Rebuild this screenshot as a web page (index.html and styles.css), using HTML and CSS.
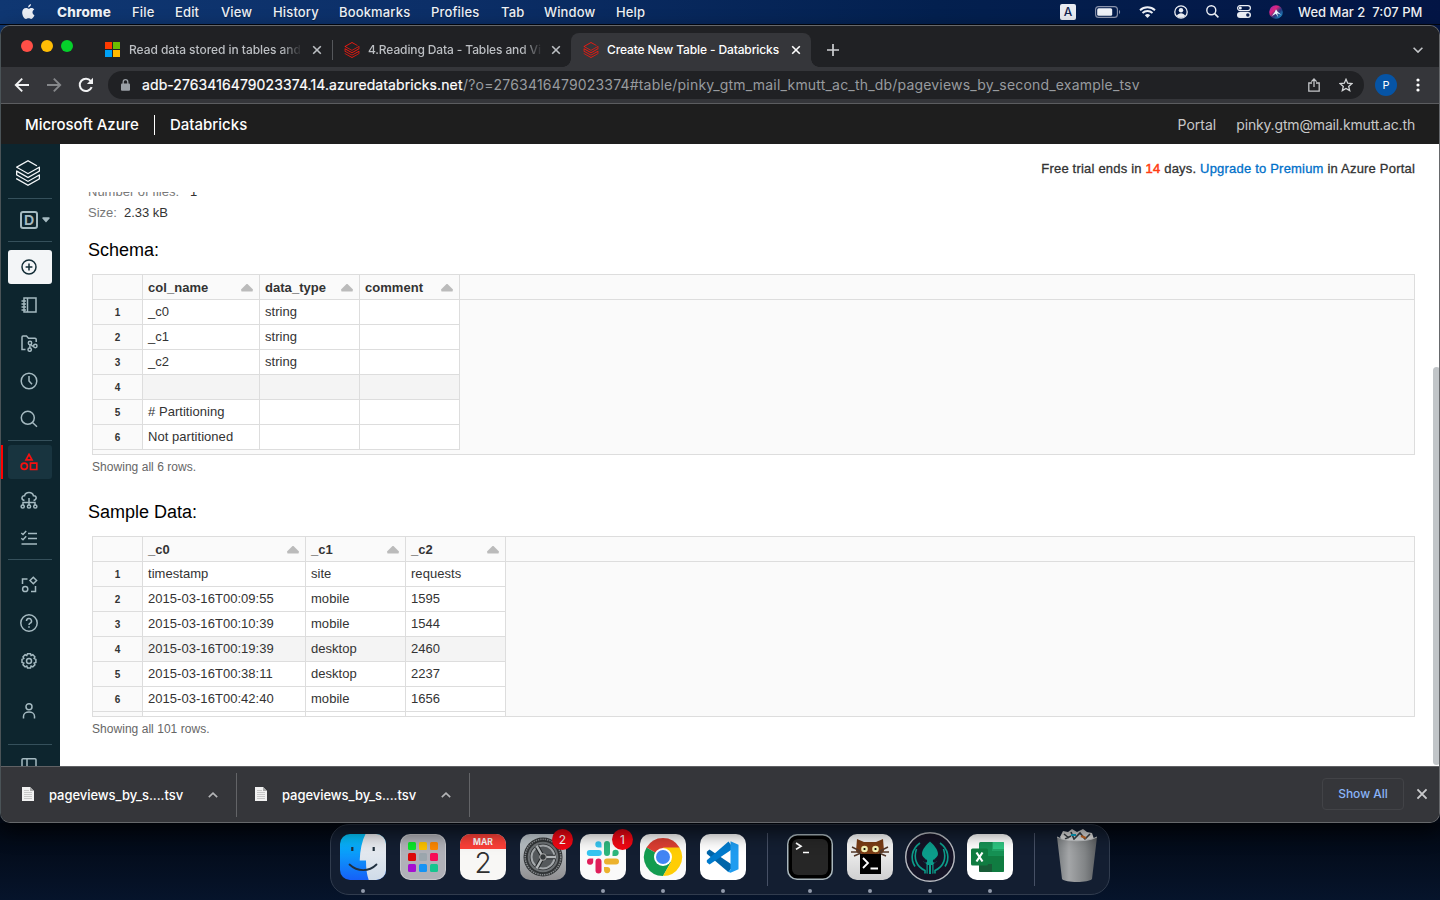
FILE: index.html
```html
<!DOCTYPE html>
<html lang="en">
<head>
<meta charset="utf-8">
<title>Create New Table - Databricks</title>
<link rel="stylesheet" href="styles.css">
</head>
<body>
<svg class="defs" width="0" height="0">
  <symbol id="bricks" viewBox="0 0 24 24"><path fill="currentColor" d="M.95 14.184L12 20.403l9.919-5.55v2.21L12 22.662l-10.484-5.96-.565.308v.77L12 24l11.05-6.218v-4.317l-.515-.309L12 19.118l-9.867-5.653v-2.21L12 16.805l11.05-6.218V6.32l-.515-.308L12 11.974 2.647 6.681 12 1.388l7.76 4.368.668-.411v-.566L12 0 .95 6.27v.72L12 13.207l9.919-5.55v2.26L12 15.52 1.516 9.56l-.565.308z"/></symbol>
  <symbol id="close" viewBox="0 0 10 10"><path d="M1.2 1.2l7.6 7.6M8.8 1.2L1.2 8.8" stroke="currentColor" stroke-width="1.6" fill="none"/></symbol>
  <symbol id="file" viewBox="0 0 12 14"><path fill="#f1f1f1" d="M0 0h8l4 4v10H0z"/><path fill="#aaa" d="M8 0v4h4z"/><path stroke="#c8c8c8" d="M2 3.5h5M2 5.5h8M2 7.5h8M2 9.5h8M2 11.5h8"/></symbol>
  <symbol id="up" viewBox="0 0 10 6"><path d="M.8 5.2L5 1.2l4.200 4" fill="none" stroke="#b4b5b7" stroke-width="1.6"/></symbol>
</svg>

<header class="menubar">
  <svg class="apple" viewBox="0 0 14 17"><path fill="#e9edf4" d="M9.700 0c.15 1.900-1.350 3.500-3.100 3.600C6.400 1.900 8 .2 9.700 0zM11.300 8.900c0-1.600 1-2.500 1.900-3.100C12.300 4.500 11 4.200 10.300 4.200c-1.300 0-2.200.8-3 .8s-1.700-.8-2.900-.8C2 4.300.2 6.100.2 9c0 3.400 2.200 7 4.100 7 1 0 1.500-.7 2.800-.7 1.300 0 1.700.7 2.800.7 1.500 0 2.900-2.400 3.500-3.900-1.200-.5-2.100-1.600-2.100-3.200z"/></svg>
  <nav class="menus">
    <b>Chrome</b><span>File</span><span>Edit</span><span>View</span><span>History</span><span>Bookmarks</span><span>Profiles</span><span>Tab</span><span>Window</span><span>Help</span>
  </nav>
  <div class="status">
    <i class="input-src">A</i>
    <svg width="26" height="12" viewBox="0 0 26 12"><rect x=".6" y=".6" width="21.800" height="10.800" rx="3" fill="none" stroke="#8b94ad" stroke-width="1.100"/><rect x="2.200" y="2.200" width="15" height="7.600" rx="1.500" fill="#eef1f7"/><path d="M24 4v4c1.500-.6 1.500-3.400 0-4z" fill="#8b94ad"/></svg>
    <svg width="17" height="12" viewBox="0 0 17 12"><path d="M1 4.300a10.800 10.800 0 0 1 15 0M3.500 7a7.200 7.200 0 0 1 10 0" fill="none" stroke="#eef1f7" stroke-width="1.900"/><path d="M8.500 12L5.800 9.200a4 4 0 0 1 5.400 0z" fill="#eef1f7"/></svg>
    <svg width="14" height="14" viewBox="0 0 14 14"><circle cx="7" cy="7" r="6.200" fill="none" stroke="#eef1f7" stroke-width="1.300"/><circle cx="7" cy="5.200" r="2.200" fill="#eef1f7"/><path d="M2.800 10.700c1.500-3.400 6.900-3.400 8.400 0-2 2.700-6.400 2.700-8.400 0z" fill="#eef1f7"/></svg>
    <svg width="13" height="13" viewBox="0 0 13 13"><circle cx="5.300" cy="5.300" r="4.500" fill="none" stroke="#eef1f7" stroke-width="1.400"/><path d="M8.600 8.600l3.800 3.800" stroke="#eef1f7" stroke-width="1.600"/></svg>
    <svg width="14" height="13" viewBox="0 0 14 13"><rect x=".6" y=".6" width="12.800" height="5" rx="2.500" fill="none" stroke="#eef1f7" stroke-width="1.200"/><circle cx="3.300" cy="3.100" r="1.500" fill="#eef1f7"/><rect y="7" width="14" height="6" rx="3" fill="#eef1f7"/><circle cx="10.800" cy="10" r="1.700" fill="#0a1f50"/></svg>
    <svg width="14" height="14" viewBox="0 0 14 14"><defs><linearGradient id="siri" x1="0" y1="0" x2="1" y2="1"><stop offset="0" stop-color="#8a2bc0"/><stop offset=".35" stop-color="#e0247c"/><stop offset=".6" stop-color="#253a80"/><stop offset="1" stop-color="#1ab5e8"/></linearGradient></defs><circle cx="7" cy="7" r="6.800" fill="url(#siri)"/><path d="M7 4.200l1.400 2.400 3.800 3.200-4-1.500.8 3.800-2.200-3.400-4 2.200 3-3.800z" fill="#eafaff"/></svg>
    <time class="clock">Wed Mar 2&nbsp; 7:07 PM</time>
  </div>
</header>

<section class="window">
  <div class="tabstrip">
    <div class="lights"><i class="red"></i><i class="yellow"></i><i class="green"></i></div>
    <div class="tab tab-one">
      <svg width="15" height="15" viewBox="0 0 15 15"><path fill="#ff3a00" d="M0 0h7v7H0z"/><path fill="#6bbd00" d="M8 0h7v7H8z"/><path fill="#00a1f6" d="M0 8h7v7H0z"/><path fill="#ffb900" d="M8 8h7v7H8z"/></svg>
      <span class="title fade">Read data stored in tables and</span>
      <svg class="x"><use href="#close"/></svg>
    </div>
    <i class="tabsep"></i>
    <div class="tab tab-two">
      <svg class="fav"><use href="#bricks"/></svg>
      <span class="title fade">4.Reading Data - Tables and Vi</span>
      <svg class="x"><use href="#close"/></svg>
    </div>
    <div class="tab tab-active">
      <svg class="fav"><use href="#bricks"/></svg>
      <span class="title">Create New Table - Databricks</span>
      <svg class="x"><use href="#close"/></svg>
    </div>
    <svg class="plus" viewBox="0 0 12 12"><path d="M6 0v12M0 6h12" stroke="#cfd1d4" stroke-width="1.700"/></svg>
    <svg class="tabmenu" viewBox="0 0 10 6"><path d="M.6.8L5 5.100 9.400.8" fill="none" stroke="#c4c6c9" stroke-width="1.600"/></svg>
  </div>

  <div class="toolbar">
    <svg class="tool" viewBox="0 0 16 16"><path d="M15 8H2M8.200 1.600L1.800 8l6.400 6.400" fill="none" stroke="#f1f2f3" stroke-width="1.900"/></svg>
    <svg class="tool" viewBox="0 0 16 16"><path d="M1 8h13M7.800 1.600L14.200 8l-6.400 6.400" fill="none" stroke="#85878a" stroke-width="1.900"/></svg>
    <svg class="tool" viewBox="0 0 16 16"><path d="M13.700 10.200A6.200 6.200 0 1 1 12.800 4" fill="none" stroke="#f1f2f3" stroke-width="2"/><path d="M15 .8v6.100H8.900z" fill="#f1f2f3"/></svg>
    <div class="omnibox">
      <svg width="9" height="12" viewBox="0 0 9 12"><rect y="4.500" width="9" height="7.300" rx="1" fill="#9ba0a6"/><path d="M2.200 5V3a2.300 2.300 0 0 1 4.600 0v2" fill="none" stroke="#9ba0a6" stroke-width="1.300"/></svg>
      <span class="url"><em>adb-2763416479023374.14.azuredatabricks.net</em><span>/?o=2763416479023374#table/pinky_gtm_mail_kmutt_ac_th_db/pageviews_by_second_example_tsv</span></span>
      <svg class="share" width="12" height="14" viewBox="0 0 12 14"><path d="M4 5H.8v8.200h10.400V5H8M6 9V1.200M3.400 3.600L6 1l2.600 2.600" fill="none" stroke="#c3c5c8" stroke-width="1.300"/></svg>
      <svg class="star" width="14" height="14" viewBox="0 0 14 14"><path d="M7 1.300l1.700 3.900 4.200.4-3.200 2.800 1 4.200L7 10.400l-3.700 2.200 1-4.200L1.100 5.600l4.200-.4z" fill="none" stroke="#d3d5d7" stroke-width="1.300"/></svg>
    </div>
    <i class="avatar">P</i>
    <svg class="dots" viewBox="0 0 4 14"><circle cx="2" cy="2" r="1.600"/><circle cx="2" cy="7" r="1.600"/><circle cx="2" cy="12" r="1.600"/></svg>
  </div>

  <div class="azure">
    <strong class="ms">Microsoft Azure</strong><i></i><strong class="db">Databricks</strong>
    <span class="portal">Portal</span><span class="mail">pinky.gtm@mail.kmutt.ac.th</span>
  </div>

  <div class="app">
    <aside class="side">
      <div class="brand"><svg width="26" height="26"><use href="#bricks"/></svg></div>
      <div class="workspace"><i>D</i><svg width="8" height="6" viewBox="0 0 8 6"><path d="M1 .3h6a.8.800 0 0 1 .6 1.300L4 5.500.4 1.600A.8.800 0 0 1 1 .3z" fill="#a5bac1"/></svg></div>
      <div class="create"><svg viewBox="0 0 18 18"><circle cx="9" cy="9" r="7"/><path d="M9 5.600v6.800M5.600 9h6.800"/></svg></div>
      <div class="nav"><svg viewBox="0 0 18 18"><path d="M4 2h12v14H4zM7.500 2v14M1.500 5H6M1.500 8H6M1.500 11H6M1.500 14H6"/></svg></div>
      <div class="nav"><svg viewBox="0 0 18 18"><path d="M5.500 15.500H2V3.200C2 2.500 2.300 2 3 2h3.500l2 2.200H15c.8 0 1.200.4 1.200 1.200V8"/><circle cx="10" cy="9" r="1.700"/><circle cx="15.300" cy="12" r="1.700"/><circle cx="9.700" cy="15.600" r="1.700"/><path d="M9.900 10.700v3.200M11 10.400l1.200 1.600h1.400"/></svg></div>
      <div class="nav"><svg viewBox="0 0 18 18"><circle cx="9" cy="9" r="7.800"/><path d="M9 4v5l3 3.300"/></svg></div>
      <div class="nav"><svg viewBox="0 0 18 18"><circle cx="7.800" cy="7.800" r="6.500"/><path d="M12.500 12.500l4.500 4.300"/></svg></div>
      <hr>
      <div class="nav current"><svg viewBox="0 0 18 18"><path d="M9 1.400L12 6.800H6zM10.500 10.200h6.300v6.300h-6.300z"/><circle cx="4.300" cy="13.300" r="3.100"/></svg></div>
      <div class="nav"><svg viewBox="0 0 18 18"><path d="M4.500 9.500C.5 8.500 1.700 4.300 4.600 4.700 5.500.5 12.500.5 13.400 4.700c3.400-.4 4 4 .1 4.800M9 7v7M3 14v-2.500h12V14"/><circle cx="2.700" cy="15.500" r="1.600"/><circle cx="9" cy="15.500" r="1.600"/><circle cx="15.300" cy="15.500" r="1.600"/></svg></div>
      <div class="nav"><svg viewBox="0 0 18 18"><path d="M1.300 4L3 5.500 6.200 2M1.300 9.300l1.700 1.500L6.200 7.300M8 4.400h9M8 9.600h9M1.500 15H17"/></svg></div>
      <hr>
      <div class="nav first"><svg viewBox="0 0 18 18"><path d="M2.500 8V3h5M15.500 10v5.500H11M13.300 1.200l3.300 3.300-3.300 3.300L10 4.500z"/><circle cx="5.200" cy="13" r="2.600"/></svg></div>
      <div class="nav"><svg viewBox="0 0 18 18"><circle cx="9" cy="9" r="8.200"/><path d="M6.500 7a2.500 2.500 0 1 1 3.700 2.200C9.300 9.700 9 10 9 11M9 12.300v1.500"/></svg></div>
      <div class="nav"><svg viewBox="0 0 18 18"><path d="M7.500 1.800h3l.6 1.700 1.700-.8 2.100 2.100-.8 1.700 1.800.9v3l-1.800.7.8 1.700-2.100 2.100-1.700-.8-.6 1.800h-3l-.7-1.800-1.700.8L3 12.800l.8-1.700-1.800-.7v-3l1.800-.9L3 4.800l2.100-2.100 1.700.8z"/><circle cx="9" cy="8.900" r="2.500"/></svg></div>
      <div class="nav person"><svg viewBox="0 0 18 18"><circle cx="9" cy="4.700" r="3"/><path d="M3.500 16.500v-2.200C3.500 8.700 14.500 8.700 14.500 14.300v2.200"/></svg></div>
      <hr class="last">
      <div class="nav panel"><svg viewBox="0 0 18 18"><path d="M3 1.800h12a1 1 0 0 1 1 1v12.400H2V2.800a1 1 0 0 1 1-1zM7 2v13"/></svg></div>
    </aside>

    <main class="content">
      <p class="trial">Free trial ends in <b>14</b> days. <a>Upgrade to Premium</a> in Azure Portal</p>
      <div class="scroll">
        <p class="meta files"><span>Number of files:</span>1</p>
        <p class="meta"><span>Size:</span>2.33 kB</p>
        <h2>Schema:</h2>
        <div class="grid schema">
          <div class="row head"><i></i><b>col_name<u></u></b><b>data_type<u></u></b><b>comment<u></u></b></div>
          <div class="row"><i>1</i><span>_c0</span><span>string</span><span></span></div>
          <div class="row"><i>2</i><span>_c1</span><span>string</span><span></span></div>
          <div class="row"><i>3</i><span>_c2</span><span>string</span><span></span></div>
          <div class="row hover"><i>4</i><span></span><span></span><span></span></div>
          <div class="row"><i>5</i><span># Partitioning</span><span></span><span></span></div>
          <div class="row"><i>6</i><span>Not partitioned</span><span></span><span></span></div>
        </div>
        <p class="count">Showing all 6 rows.</p>
        <h2>Sample Data:</h2>
        <div class="grid sample">
          <div class="row head"><i></i><b>_c0<u></u></b><b>_c1<u></u></b><b>_c2<u></u></b></div>
          <div class="row"><i>1</i><span>timestamp</span><span>site</span><span>requests</span></div>
          <div class="row"><i>2</i><span>2015-03-16T00:09:55</span><span>mobile</span><span>1595</span></div>
          <div class="row"><i>3</i><span>2015-03-16T00:10:39</span><span>mobile</span><span>1544</span></div>
          <div class="row hover"><i>4</i><span>2015-03-16T00:19:39</span><span>desktop</span><span>2460</span></div>
          <div class="row"><i>5</i><span>2015-03-16T00:38:11</span><span>desktop</span><span>2237</span></div>
          <div class="row"><i>6</i><span>2015-03-16T00:42:40</span><span>mobile</span><span>1656</span></div>
          <div class="row"><i></i><span></span><span></span><span></span></div>
        </div>
        <p class="count">Showing all 101 rows.</p>
      </div>
      <i class="thumb"></i>
    </main>
  </div>

  <footer class="shelf">
    <div class="download"><svg class="doc"><use href="#file"/></svg><span>pageviews_by_s....tsv</span><svg class="chev"><use href="#up"/></svg></div>
    <div class="download"><svg class="doc"><use href="#file"/></svg><span>pageviews_by_s....tsv</span><svg class="chev"><use href="#up"/></svg></div>
    <div class="showall">Show All</div>
    <svg class="shelf-x"><use href="#close"/></svg>
  </footer>
</section>

<div class="desktop">
  <div class="dock">
    <div class="appicon run"><svg viewBox="0 0 46 46"><defs><linearGradient id="fb" x2="0" y2="1"><stop stop-color="#03c8fd"/><stop offset="1" stop-color="#1660f8"/></linearGradient><linearGradient id="fw" x2="0" y2="1"><stop stop-color="#f1f1f4"/><stop offset="1" stop-color="#cfdbe8"/></linearGradient><clipPath id="r"><rect width="46" height="46" rx="10"/></clipPath></defs><g clip-path="url(#r)"><path fill="url(#fb)" d="M0 0h46v46H0z"/><path fill="url(#fw)" d="M25.500 0C22 7 20 16 19.700 26.500H26c0 8 .8 14 2.700 19.500H46V0z"/></g><path d="M12.300 13v4M33.700 13v4" stroke="#20303c" stroke-width="2.200"/><path d="M9.500 30.500c8 7.500 19.500 7.500 27 0" fill="none" stroke="#203040" stroke-width="1.800" stroke-linecap="round"/></svg></div>
    <div class="appicon"><svg viewBox="0 0 46 46"><rect width="46" height="46" rx="10" fill="#c7c8cc"/><rect x="1" y="1" width="44" height="44" rx="9" fill="#b0b1b8"/><g><rect x="8" y="8" width="8" height="8" rx="1.500" fill="#0be52a"/><rect x="19" y="8" width="8" height="8" rx="1.500" fill="#fbc100"/><rect x="30" y="8" width="8" height="8" rx="1.500" fill="#fb8700"/><rect x="8" y="19" width="8" height="8" rx="1.500" fill="#dc0909"/><rect x="19" y="19" width="8" height="8" rx="1.500" fill="#9ba6ad"/><rect x="30" y="19" width="8" height="8" rx="1.500" fill="#f70c57"/><rect x="8" y="30" width="8" height="8" rx="1.500" fill="#a50fd1"/><rect x="19" y="30" width="8" height="8" rx="1.500" fill="#1593f4"/><rect x="30" y="30" width="8" height="8" rx="1.500" fill="#16c58f"/></g></svg></div>
    <div class="appicon calendar"><b>MAR</b><span>2</span></div>
    <div class="appicon"><svg viewBox="0 0 46 46"><defs><linearGradient id="sg" x2="0" y2="1"><stop stop-color="#c2ccd2"/><stop offset="1" stop-color="#908f91"/></linearGradient></defs><rect width="46" height="46" rx="10" fill="url(#sg)"/><circle cx="23" cy="23" r="19.500" fill="#303335"/><circle cx="23" cy="23" r="17.800" fill="none" stroke="#85898c" stroke-width="1.600" stroke-dasharray="1.400 .9"/><circle cx="23" cy="23" r="15.300" fill="#6d7174"/><circle cx="23" cy="23" r="12.500" fill="#55595c" stroke="#2c2f31" stroke-width="1.500"/><circle cx="23" cy="23" r="11.500" fill="none" stroke="#a4a8ab" stroke-width="2"/><path d="M23 23h12M23 23l-6-10.400M23 23l-6 10.400" stroke="#232628" stroke-width="4.500"/><path d="M23 23h13M23 23l-6.500-11.300M23 23l-6.500 11.300" stroke="#b2b6b8" stroke-width="2.400"/><circle cx="23" cy="23" r="3.300" fill="#34383a" stroke="#aaa"/></svg><em>2</em></div>
    <div class="appicon run"><svg viewBox="0 0 46 46"><rect width="46" height="46" rx="10" fill="#fafafa"/><path fill="#36c5f0" d="M21.500 13.500h-3a3.100 3.100 0 1 1 3-3.100zM9.800 16h9a3 3 0 0 1 0 6h-9a3 3 0 0 1 0-6z"/><path fill="#2eb67d" d="M24 10a3 3 0 0 1 6 0v9a3 3 0 0 1-6 0zM32.500 22v-3a3.100 3.100 0 1 1 3.100 3z"/><path fill="#ecb22e" d="M27 24.500h9a3 3 0 0 1 0 6h-9a3 3 0 0 1 0-6zM24 33h3.100a3.100 3.100 0 1 1-3.100 3.100z"/><path fill="#e01e5a" d="M15.500 27.500a3 3 0 0 1 6 0v9a3 3 0 0 1-6 0zM13.200 24.500v3a3.100 3.100 0 1 1-3.100-3z"/></svg><em>1</em></div>
    <div class="appicon run"><svg viewBox="0 0 46 46"><rect width="46" height="46" rx="10" fill="#fafafa"/><path fill="#dc3e32" d="M23 23L6.500 13.500a19 19 0 0 1 33 0z"/><path fill="#139c50" d="M23 23L6.500 13.500A19 19 0 0 0 23 42l8-14z"/><path fill="#ffcd05" d="M23 13.500h16.500A19 19 0 0 1 23 42l8.200-14.500z"/><circle cx="23" cy="23" r="9" fill="#fff"/><circle cx="23" cy="23" r="7" fill="#4285f4"/></svg></div>
    <div class="appicon run"><svg viewBox="0 0 46 46"><rect width="46" height="46" rx="10" fill="#fff"/><path fill="#0065a9" d="M9.500 15.500L6.800 17.700v2l21.700 18.600 2.500-3.500V30z"/><path fill="#007acc" d="M6.800 28.300v-2L28.500 7.500 31 11v5L9.500 30.500z"/><path fill="#1f9cf0" d="M30.500 7.200l8 3.500v24.600l-8 3.500-3-1.300 3-1.500z"/></svg></div>
    <i class="split one"></i>
    <div class="appicon run"><svg viewBox="0 0 46 46"><rect width="46" height="46" rx="10" fill="#a9b6bc"/><rect x="1.500" y="1.500" width="43" height="43" rx="8.800" fill="#000"/><rect x="5" y="5" width="36" height="36" rx="6" fill="#262626"/><path d="M9 9l5 3.200L9 15.400M16 18.500h6" fill="none" stroke="#fff" stroke-width="1.700"/></svg></div>
    <div class="appicon run"><svg viewBox="0 0 46 46"><defs><linearGradient id="cg" x2="0" y2="1"><stop stop-color="#fff"/><stop offset="1" stop-color="#cfcfd0"/></linearGradient></defs><rect width="46" height="46" rx="10" fill="url(#cg)"/><path fill="#7a3c15" d="M10 5l7 3h12l7-3 1 12c-2 5-26 5-28 0z"/><path d="M5 13l8 4M4 18h9M7 22l7-3M41 13l-8 4M42 18h-9M39 22l-7-3" stroke="#53382a" stroke-width="1.400"/><circle cx="17.500" cy="15" r="3.300" fill="#f6f3b5"/><circle cx="28.500" cy="15" r="3.300" fill="#f6f3b5"/><circle cx="17.500" cy="15" r="1.100"/><circle cx="28.500" cy="15" r="1.100"/><path d="M13 20h21v20H13z"/><path d="M16 24l5 5-5 5M23.500 34.500H31" fill="none" stroke="#fff" stroke-width="1.800"/></svg></div>
    <div class="appicon run kraken"><svg viewBox="0 0 50 50"><circle cx="25" cy="25" r="24.300" fill="#141326" stroke="#b9bcc2" stroke-width="1.400"/><path fill="#0c9d8b" d="M25 9.500c3.500 3 8 8 8 12.500 0 2.500-2.500 4-3.500 5l2 2.500-3 2.500v9.500l-1.200.2V33h-1.300v9h-2v-9h-1.300v8.700l-1.200-.2V32l-3-2.500 2-2.500c-1-1-3.500-2.500-3.500-5 0-4.500 4.500-9.500 8-12.500z"/><path d="M15 11C6.500 17 5 27 10 34.500M11.500 17c-3 9-.5 17.500 8.500 21.500v3M35 11c8.500 6 10 16 5 23.500M38.500 17c3 9 .5 17.500-8.500 21.500v3" fill="none" stroke="#0c9d8b" stroke-width="1.600"/><circle cx="20.500" cy="29" r="1.700" fill="#141326"/><circle cx="29.500" cy="29" r="1.700" fill="#141326"/></svg></div>
    <div class="appicon run"><svg viewBox="0 0 46 46"><rect width="46" height="46" rx="10" fill="#fff"/><rect x="12" y="8" width="25" height="30" rx="1.500" fill="#169154"/><path fill="#21a366" d="M25 8h10.500A1.500 1.500 0 0 1 37 9.500V17H25z"/><path fill="#2fc481" d="M26 8h9.500A1.500 1.500 0 0 1 37 9.500V15H26z"/><path fill="#107c41" d="M12 22h25v8H12z"/><path fill="#185c37" d="M12 30h13v8H13.500a1.500 1.500 0 0 1-1.500-1.500z"/><path fill="#107c41" d="M25 30h12v6.500a1.500 1.500 0 0 1-1.500 1.500H25z"/><rect x="4" y="14.500" width="17" height="17" rx="1.500" fill="#107c41"/><path d="M9.500 18.500l6 9M15.500 18.500l-6 9" stroke="#fff" stroke-width="2.200"/></svg></div>
    <i class="split two"></i>
    <svg class="trash" viewBox="0 0 42 54"><defs><linearGradient id="tg"><stop stop-color="#777b7e"/><stop offset=".3" stop-color="#a4a6a8"/><stop offset=".7" stop-color="#818486"/><stop offset="1" stop-color="#5a5d60"/></linearGradient></defs><path fill="#ddd" d="M4 8l3-6 5 1 4-3 5 3 6-3 4 3 5 1 2 6-5 5H8z"/><path d="M8 5l5 4M15 3l3 7 6-6 5 6 5-5M9 10l6-3" stroke="#383e43" stroke-width="1.600" fill="none"/><path d="M15 6h5" stroke="#09a6c8" stroke-width="2"/><path d="M25 7l5 2" stroke="#c46622" stroke-width="2"/><path fill="url(#tg)" d="M1 8c8 5 32 5 40 0l-5 42c-3 4-27 4-30 0z"/><path d="M1 8c8 5 32 5 40 0" stroke="#c1c4c6" fill="none"/></svg>
  </div>
</div>
</body>
</html>
```
FILE: styles.css
```css
* { box-sizing: border-box; }
body { margin: 0; width: 1440px; height: 900px; overflow: hidden; display: flex; flex-direction: column; background: linear-gradient(90deg, #0f3772 0, #0c2f68 30%, #03204f 65%, #031545 100%) 0 0 / 100% 60px no-repeat, #030b1a; font-family: Inter, "Liberation Sans", sans-serif; }
i, em { font-style: normal; }
p, h2 { margin: 0; font-weight: 400; }
svg { display: block; flex: none; }
.defs { position: absolute; }

.menubar { height: 25px; flex: none; display: flex; align-items: center; padding: 0 18px 1px 22px; color: #edf1f7; font-size: 13px; font-weight: 500; line-height: 24px; white-space: nowrap; border-bottom: 1px solid #02060f; text-shadow: 0 1px 1px #0006; }
.apple { width: 13px; height: 16px; margin-right: 22px; }
.menus { display: grid; grid-template-columns: 75px 43px 46px 52px 66px 92px 70px 43px 72px 40px; letter-spacing: .15px; }
.menus b { font-weight: 800; font-size: 13.500px; letter-spacing: .2px; }
.status { display: flex; align-items: center; margin-left: auto; }
.input-src { width: 16px; height: 16px; border-radius: 2px; background: #e9ecf2; color: #10234e; font-size: 12px; line-height: 16px; text-align: center; margin-right: 19px; text-shadow: none; }
.status svg + svg { margin-left: 18px; }
.clock { margin-left: 15px; width: 124px; }

.window { width: 1440px; height: 798px; flex: none; display: flex; flex-direction: column; border: 1px solid #66686b; border-left-color: #4a5357; border-radius: 10px; overflow: hidden; background: #202124; position: relative; z-index: 1; box-shadow: 0 8px 20px #000a; }
.tabstrip { height: 41px; flex: none; display: flex; align-items: center; padding: 7px 16px 0 20px; background: #202124; color: #bcbfc3; font-size: 12px; font-weight: 500; }
.lights { display: flex; gap: 8px; margin: -8px 32px 0 0; }
.lights i { width: 12px; height: 12px; border-radius: 50%; }
.red { background: #ff4f47; } .yellow { background: #ffbd05; } .green { background: #05d02b; }
.tab { height: 34px; display: flex; align-items: center; flex: none; padding-bottom: 1px; }
.title { white-space: nowrap; letter-spacing: -.12px; }
.fade { -webkit-mask-image: linear-gradient(90deg, #000 88%, transparent); mask-image: linear-gradient(90deg, #000 88%, transparent); }
.tab-one .title { letter-spacing: -.05px; }
.fav { width: 16px; height: 16px; color: #f01a10; }
.x { width: 10px; height: 10px; }
.tab-one { width: 217px; } .tab-one .title { width: 173px; margin: 0 10px 0 9px; }
.tabsep { width: 1px; height: 20px; background: #55575b; margin: 0 11px 0 10px; }
.tab-two { width: 227px; } .tab-two .title { width: 175px; margin: 0 8px; }
.tab-active { width: 240px; padding: 0 12px 1px; background: #35363a; border-radius: 8px 8px 0 0; color: #fff; position: relative; }
.tab-active::before, .tab-active::after { content: ""; position: absolute; bottom: 0; width: 8px; height: 8px; }
.tab-active::before { left: -8px; background: radial-gradient(circle at 0 0, transparent 7.500px, #35363a 8px); }
.tab-active::after { right: -8px; background: radial-gradient(circle at 100% 0, transparent 7.500px, #35363a 8px); }
.tab-active .title { width: 175px; margin: 0 9px 0 8px; }
.tab-active .x { margin-left: 1px; margin-right: -2px; }
.plus { width: 12px; height: 12px; margin-left: 16px; }
.tabmenu { width: 10px; height: 6px; margin-left: auto; }

.toolbar { height: 37px; flex: none; display: flex; align-items: center; padding: 0 19px 1px 13px; background: #35363a; border-bottom: 1px solid #5c5d60; }
.tool { width: 16px; height: 16px; margin-right: 16px; }
.tool:nth-child(3) { margin-right: 14px; }
.omnibox { width: 1256px; height: 28px; border-radius: 14px; background: #202124; display: flex; align-items: center; padding: 0 11px 0 13px; }
.url { margin-left: 12px; font-size: 14px; white-space: nowrap; color: #989b9f; display: flex; }
.url em { color: #fff; width: 321px; letter-spacing: .1px; -webkit-text-stroke: .2px #fff; }
.url span { letter-spacing: .19px; }
.share { margin-left: auto; margin-right: 19px; }
.avatar { width: 22px; height: 22px; border-radius: 50%; background: #0654a5; color: #fff; font-size: 11px; line-height: 22px; text-align: center; margin-left: 11px; }
.dots { width: 4px; height: 14px; margin-left: auto; fill: #fff; }

.azure { height: 40px; flex: none; display: flex; align-items: center; padding: 2px 24px 0 24px; background: #1e1e1e; color: #fff; font-size: 15px; line-height: 20px; white-space: nowrap; }
.azure strong { font-weight: 500; }
.azure i { width: 1px; height: 20px; background: #fff; margin: -1px 15px 0; }
.ms { width: 114px; letter-spacing: -.04px; }
.azure span { font-size: 14px; color: #c8c8c8; }
.portal { margin-left: auto; margin-right: 20px; }
.azure .mail { letter-spacing: -.16px; }

.app { height: 622px; flex: none; display: flex; }
.side { width: 59px; background: #0d252e; overflow: hidden; display: flex; flex-direction: column; padding: 0 8px 0 7px; }
.side > * { flex: none; }
.side svg { color: #f3f6f8; }
.brand { height: 55px; padding: 16px 0 0 7px; border-bottom: 1px solid #35505b; }
.workspace { height: 43px; display: flex; align-items: center; gap: 4px; padding-left: 12px; border-bottom: 1px solid #35505b; }
.workspace i { width: 18px; height: 18px; border: 2px solid #a5bac1; border-radius: 3px; color: #a5bac1; font: bold 14px/14px "Liberation Sans", sans-serif; text-align: center; }
.create { margin-top: 8px; height: 34px; background: #f3f5f7; border-radius: 3px; margin-bottom: 2px; display: grid; place-items: center; }
.create svg, .nav svg { width: 18px; height: 18px; fill: none; stroke: #a5bac1; stroke-width: 1.500; margin-left: -2px; }
.create svg { stroke: #132d37; stroke-width: 1.500; }
.nav { height: 38px; display: grid; place-items: center; }
.side hr { width: 44px; height: 1px; margin: 2px 0 4px; border: 0; background: #35505b; }
.current { height: 34px; margin-bottom: 2px; background: #18343f; border-radius: 3px; position: relative; }
.current::before { content: ""; position: absolute; left: -8px; top: 0; width: 3px; height: 34px; background: #f00; }
.nav.current svg { stroke: #f81010; stroke-width: 1.700; }
.first { margin-top: 2px; }
.person { margin-top: 12px; }
.side hr.last { margin: 14px 0 0; }
.panel { margin-top: 3px; }
.nav.panel { place-items: start center; padding-top: 9px; }

.content { flex: 1; background: #fff; color: #333; font: 13px/20px "Liberation Sans", Arial, sans-serif; position: relative; padding: 15px 24px 0 28px; }
.trial { text-align: right; height: 33px; line-height: 19px; letter-spacing: .2px; -webkit-text-stroke: .3px; color: #333; }
.trial b { color: #ff3d12; font-weight: 400; -webkit-text-stroke: .5px; }
.trial a { color: #0070c9; }
.scroll { height: 574px; overflow: hidden; }
.meta { height: 22px; line-height: 22px; }
.meta span { color: #777; margin-right: 7px; }
.files { margin-top: -11px; height: 21px; } .files span { margin-right: 11px; }
h2 { font-size: 18px; line-height: 24px; color: #000; margin: 14px 0 12px; }
.grid { height: 181px; overflow: hidden; margin: 0 0 0 4px; border: 1px solid #ddd; background: #fafafa; }
.row { display: grid; height: 25px; grid-template-rows: 25px; }
.schema .row { grid-template-columns: 50px 117px 100px 100px; letter-spacing: .04px; }
.sample .row { grid-template-columns: 50px 163px 100px 100px; letter-spacing: .04px; }
.row > * { border-right: 1px solid #ddd; border-bottom: 1px solid #ddd; padding-left: 5px; line-height: 24px; background: #fff; white-space: nowrap; }
.row > i { padding: 1px 0 0; text-align: center; font-size: 10px; line-height: 23px; font-weight: 700; background: #fafafa; }
.row.head { border-bottom: 1px solid #ddd; grid-template-rows: 24px; }
.row.head > * { border-bottom: 0; background: #fafafa; line-height: 22px; }
.row.head > b { display: flex; justify-content: space-between; align-items: center; padding: 2px 6px 0 5px; }
.head u { width: 12px; height: 8px; margin-top: -1px; background: #bbb; clip-path: polygon(50% 0, 100% 75%, 96% 100%, 4% 100%, 0 75%); }
.row.hover > span { background: #f4f4f4; }
.count { margin-left: 4px; font-size: 12px; line-height: 24px; color: #666; letter-spacing: .04px; }
.count + h2 { margin-top: 21px; }
.thumb { position: absolute; right: -1px; top: 223px; width: 7px; height: 398px; border-radius: 4px; background: #c1c5c8; }

.shelf { height: 56px; flex: none; display: flex; align-items: center; background: #35363a; border-top: 1px solid #606164; color: #fff; font-size: 13px; font-weight: 500; padding-right: 11px; }
.download { height: 44px; width: 236px; padding: 0 18px 0 21px; border-right: 1px solid #636467; display: flex; align-items: center; white-space: nowrap; letter-spacing: -.05px; }
.download + .download { width: 233px; padding-left: 18px; }
.doc { width: 12px; height: 14px; margin: -2px 15px 0 0; }
.chev { width: 10px; height: 6px; margin-left: auto; }
.showall { width: 82px; height: 32px; margin: -2px 0 0 auto; border: 1px solid #424347; border-radius: 4px; color: #8ab4f8; font-size: 12px; line-height: 30px; text-align: center; }
.shelf-x { width: 12px; height: 12px; margin: -2px 0 0 12px; color: #c9cacc; }

.desktop { flex: 1; background: linear-gradient(180deg, #020813, #06142b); padding: 1px 0 0 330px; }
.dock { width: 780px; height: 71px; border: 1px solid #313c4e; border-radius: 19px; background: #131e31; display: flex; gap: 14px; padding: 9px 0 0 9px; }
.appicon { width: 46px; height: 46px; position: relative; flex: none; }
.appicon > svg { width: 46px; height: 46px; }
.run::after { content: ""; position: absolute; left: 21px; top: 55px; width: 4px; height: 4px; border-radius: 50%; background: #929aab; }
.appicon em { position: absolute; left: 32px; top: -5px; width: 21px; height: 21px; border-radius: 50%; background: #f00713; color: #fff; font-size: 12px; line-height: 21px; text-align: center; }
.calendar { border-radius: 10px; overflow: hidden; background: #f8f7f5; text-align: center; color: #303030; }
.calendar b { display: block; height: 15px; background: #fc4038; color: #fff; font-size: 8.500px; line-height: 16px; }
.calendar span { display: block; font-size: 28px; line-height: 28px; font-weight: 300; }
.kraken > svg { width: 50px; height: 50px; margin: -2px; }
.split { width: 1px; height: 53px; background: #465065; }
.split.one { margin: -1px 5px 0 7px; }
.split.two { margin: -1px 7px 0 7px; }
.trash { width: 42px; height: 54px; margin-top: -5px; }
```
